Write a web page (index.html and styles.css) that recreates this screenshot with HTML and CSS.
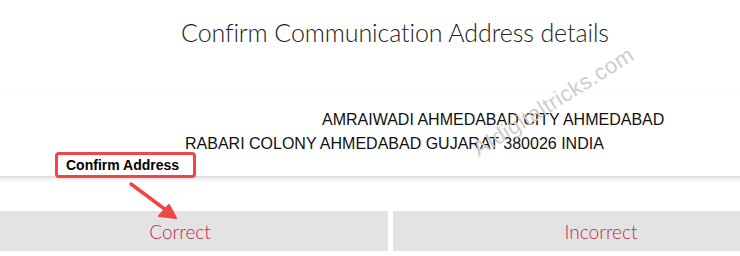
FILE: index.html
```html
<!DOCTYPE html>
<html>
<head>
<meta charset="utf-8">
<link rel="stylesheet" href="styles.css">
</head>
<body>
<div class="page">
  <section class="card">
    <h1 class="title">Confirm Communication Address details</h1>
    <div class="divider"></div>
    <div class="address">
      <p class="line line-1">AMRAIWADI AHMEDABAD CITY AHMEDABAD</p>
      <p class="line line-2">RABARI COLONY AHMEDABAD GUJARAT 380026 INDIA</p>
    </div>
  </section>
  <div class="actions">
    <button class="btn">Correct</button>
    <button class="btn">Incorrect</button>
  </div>
</div>
<div class="watermark">AIdigitaltricks.com</div>
<div class="callout">Confirm Address</div>
<svg class="arrow" width="60" height="50" viewBox="0 0 60 50">
  <line x1="3" y1="3" x2="42" y2="32" stroke="#ef4747" stroke-width="3.5" stroke-linecap="round"/>
  <polygon points="48,37 31,35 41,24" fill="#ef4747" stroke="#ef4747" stroke-width="2" stroke-linejoin="round"/>
</svg>
</body>
</html>
```
FILE: styles.css
```css
html, body {
  margin: 0;
  padding: 0;
  background: #fff;
  overflow: hidden;
  width: 740px;
  height: 256px;
}
body {
  position: relative;
  font-family: "Liberation Sans", Arial, sans-serif;
}
.page {
  width: 837px;
  margin-left: -28px;
}
.card {
  height: 176px;
  background: #fff;
  box-shadow: 0 2px 5px rgba(0, 0, 0, 0.18);
  padding-top: 1px;
  box-sizing: border-box;
}
.title {
  margin: 14px 0 0 9px;
  text-align: center;
  font-family: "Lato", sans-serif;
  font-weight: 300;
  font-size: 25px;
  line-height: 34px;
  color: #222;
  letter-spacing: -0.1px;
}
.divider {
  margin-top: 44px;
  height: 1px;
  background: #f9f9f9;
}
.address {
  margin-top: 14px;
}
.line {
  margin: 0;
  font-size: 16px;
  line-height: 24px;
  color: #111;
}
.line-1 { padding-left: 350px; }
.line-2 { padding-left: 213px; }
.actions {
  display: flex;
  gap: 5px;
  margin-top: 35px;
}
.btn {
  flex: 1;
  height: 40px;
  border: 0;
  margin: 0;
  padding: 0;
  background: #e3e3e3;
  color: #c41f55;
  font-family: "Lato", sans-serif;
  font-weight: 300;
  font-size: 19px;
}
.watermark {
  position: absolute;
  left: 482px;
  top: 136px;
  font-size: 22px;
  color: #cdcdcd;
  transform: rotate(-32deg);
  transform-origin: left bottom;
  letter-spacing: 0.4px;
}
.callout {
  position: absolute;
  left: 55px;
  top: 152px;
  width: 127px;
  height: 20px;
  border: 3px solid #ef4747;
  border-radius: 4px;
  background: #fff;
  font-weight: bold;
  font-size: 14px;
  line-height: 20px;
  padding-left: 8px;
  box-sizing: content-box;
  color: #000;
}
.arrow {
  position: absolute;
  left: 128px;
  top: 181px;
}
```
